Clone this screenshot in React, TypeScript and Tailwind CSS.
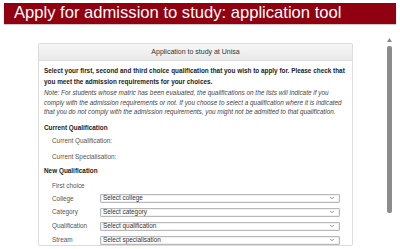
import { ChevronDown } from "lucide-react";

const choices = [
  { label: "College", value: "Select college" },
  { label: "Category", value: "Select category" },
  { label: "Qualification", value: "Select qualification" },
  { label: "Stream", value: "Select specialisation" },
];

function FakeSelect({ value }: { value: string }) {
  return (
    <div className="flex items-center justify-between w-[240px] h-[9px] border border-[#b8b8b8] rounded-[1px] bg-white pl-[2px] pr-[4px] text-[#333] shadow-[inset_0_0_0_1px_#f0f0f0]">
      <span className="leading-none">{value}</span>
      <ChevronDown className="w-[6px] h-[6px] text-[#666]" strokeWidth={3} />
    </div>
  );
}

export default function App() {
  return (
    <div className="w-[400px] h-[249px] overflow-hidden bg-white pt-[3px] font-['Liberation_Sans',Arial,sans-serif]">
      <div className="mx-[4px] h-[21px] bg-[#900010] flex items-center pl-[10px] text-white text-[16.6px] shadow-[0_1px_1px_rgba(0,0,0,0.2)]">
        Apply for admission to study: application tool
      </div>

      <div className="flex">
        <div className="flex-1 pt-[19px] pl-[38px]">
          <div className="w-[315px] border border-[#dcdcdc] rounded-[2px] bg-white">
            <div className="h-[17px] flex items-center justify-center text-[7px] text-[#333] bg-gradient-to-b from-[#f7f7f7] to-[#e9e9e9] border-b border-[#dcdcdc]">
              Application to study at Unisa
            </div>

            <div className="pl-[5px] pt-[4px] text-[6.4px] text-[#222]">
              <p className="font-bold leading-[11px] whitespace-nowrap">
                Select your first, second and third choice qualification that you wish to apply for. Please check that
                <br />
                you meet the admission requirements for your choices.
              </p>
              <p className="italic leading-[9.5px] text-[#444] whitespace-nowrap mt-[1px]">
                Note: For students whose matric has been evaluated, the qualifications on the lists will indicate if you
                <br />
                comply with the admission requirements or not. If you choose to select a qualification where it is indicated
                <br />
                that you do not comply with the admission requirements, you might not be admitted to that qualification.
              </p>

              <p className="font-bold mt-[5px] leading-[11px]">Current Qualification</p>
              <div className="pl-[8px] text-[#555]">
                <p className="mt-[3px] leading-[10px]">Current Qualification:</p>
                <p className="mt-[6px] leading-[10px]">Current Specialisation:</p>
              </div>

              <p className="font-bold mt-[3px] leading-[11px] text-[#222]">New Qualification</p>
              <div className="pl-[8px] text-[#555]">
                <p className="mt-[5px] leading-[10px]">First choice</p>
                <div className="flex flex-col gap-[4.3px] mt-[3px]">
                  {choices.map((c) => (
                    <div key={c.label} className="flex items-center">
                      <span className="w-[48px]">{c.label}</span>
                      <FakeSelect value={c.value} />
                    </div>
                  ))}
                </div>
              </div>
            </div>
          </div>
        </div>

        <div className="w-[12px] pt-[14px] flex flex-col items-center mr-[5px]">
          <svg width="5" height="4" viewBox="0 0 5 4" className="mb-[4px]">
            <polygon points="2.5,0 5,4 0,4" fill="#8a8a8a" />
          </svg>
          <div className="w-[5px] h-[167px] rounded-[2px] bg-[#8c8c8c]" />
        </div>
      </div>
    </div>
  );
}
